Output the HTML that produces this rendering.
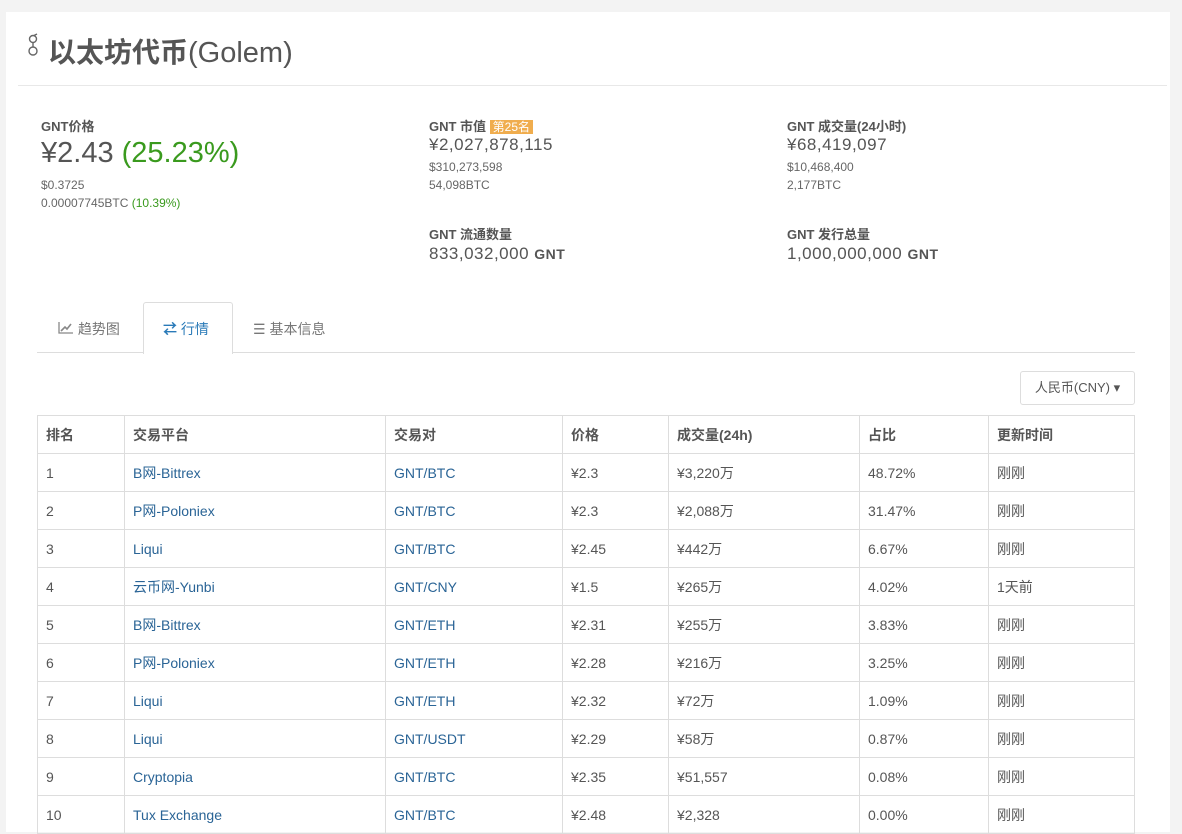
<!DOCTYPE html>
<html><head><meta charset="utf-8"><style>
body{margin:0;background:#f3f3f3;font-family:"Liberation Sans","Noto Sans CJK SC",sans-serif;color:#555;width:1182px;height:822px;overflow:hidden;position:relative}
.panel{position:absolute;left:6px;top:12px;width:1164px;height:820px;background:#fff}
.abs{position:absolute;white-space:nowrap}
.hr{position:absolute;left:12px;top:73px;width:1149px;height:1px;background:#e8e8e8}
.lbl{font-size:13px;font-weight:bold;color:#555}
.big{font-size:17px;color:#555;letter-spacing:.5px}
.sm{font-size:12px;color:#666;line-height:18px}
.g{color:#3a9a1e}
table{position:absolute;left:31px;top:403px;border-collapse:collapse;font-size:14px;width:1098px}
td,th{border:1px solid #ddd;height:37px;padding:0 8px;text-align:left;color:#555}
th{font-weight:bold;height:37px}
a{color:#2a6496;text-decoration:none}
.tabs{position:absolute;left:31px;top:340px;width:1098px;height:1px;background:#ddd}
.tab{position:absolute;font-size:14px;color:#777}
</style></head><body>
<div class="panel">
<svg class="abs" style="left:20px;top:21px" width="14" height="26" viewBox="0 0 14 26"><circle cx="7" cy="6" r="3.5" fill="none" stroke="#666" stroke-width="1.4"/><circle cx="7" cy="18" r="4" fill="none" stroke="#666" stroke-width="1.4"/><path d="M7 9.5 L7 14" stroke="#666" stroke-width="1.4"/><path d="M8 2.5 L11 1" stroke="#666" stroke-width="1.4"/></svg>
<div class="abs" style="left:42px;top:19px;font-size:28px;color:#555;font-weight:bold">以太坊代币<span style="font-weight:normal;font-size:29px">(Golem)</span></div>
<div class="hr"></div>

<div class="abs lbl" style="left:35px;top:104px">GNT价格</div>
<div class="abs" style="left:35px;top:125px;font-size:29px;color:#555">¥2.43 <span class="g">(25.23%)</span></div>
<div class="abs sm" style="left:35px;top:164px">$0.3725<br>0.00007745BTC <span class="g">(10.39%)</span></div>

<div class="abs lbl" style="left:423px;top:104px">GNT 市值 <span style="background:#f0ad4e;color:#fff;font-weight:normal;padding:0 3px;font-size:12px">第25名</span></div>
<div class="abs big" style="left:423px;top:123px">¥2,027,878,115</div>
<div class="abs sm" style="left:423px;top:146px">$310,273,598<br>54,098BTC</div>

<div class="abs lbl" style="left:781px;top:104px">GNT 成交量(24小时)</div>
<div class="abs big" style="left:781px;top:123px">¥68,419,097</div>
<div class="abs sm" style="left:781px;top:146px">$10,468,400<br>2,177BTC</div>

<div class="abs lbl" style="left:423px;top:212px">GNT 流通数量</div>
<div class="abs big" style="left:423px;top:232px">833,032,000 <span style="font-size:14px;font-weight:bold">GNT</span></div>
<div class="abs lbl" style="left:781px;top:212px">GNT 发行总量</div>
<div class="abs big" style="left:781px;top:232px">1,000,000,000 <span style="font-size:14px;font-weight:bold">GNT</span></div>

<div class="tabs"></div>
<div class="abs" style="left:137px;top:290px;width:88px;height:51px;border:1px solid #ddd;border-bottom:none;background:#fff;border-radius:3px 3px 0 0"></div>
<div class="tab" style="left:52px;top:307px"><svg width="16" height="13" viewBox="0 0 16 13"><path d="M1 1V12H15" fill="none" stroke="#888" stroke-width="1.3"/><path d="M3 10L7 6L9 8L13 3" fill="none" stroke="#888" stroke-width="1.6"/></svg> 趋势图</div>
<div class="tab" style="left:157px;top:307px;color:#2a7ab8"><span style="font-weight:bold">⇄</span> 行情</div>
<div class="tab" style="left:247px;top:307px">☰ 基本信息</div>

<div class="abs" style="left:1014px;top:359px;width:113px;height:32px;border:1px solid #ddd;border-radius:3px;font-size:13px;color:#555;line-height:32px;text-align:center">人民币(CNY) ▾</div>

<table>
<colgroup><col style="width:87px"><col style="width:261px"><col style="width:177px"><col style="width:106px"><col style="width:191px"><col style="width:129px"><col></colgroup>
<tr><th>排名</th><th>交易平台</th><th>交易对</th><th>价格</th><th>成交量(24h)</th><th>占比</th><th>更新时间</th></tr>
<tr><td>1</td><td><a>B网-Bittrex</a></td><td><a>GNT/BTC</a></td><td>¥2.3</td><td>¥3,220万</td><td>48.72%</td><td>刚刚</td></tr>
<tr><td>2</td><td><a>P网-Poloniex</a></td><td><a>GNT/BTC</a></td><td>¥2.3</td><td>¥2,088万</td><td>31.47%</td><td>刚刚</td></tr>
<tr><td>3</td><td><a>Liqui</a></td><td><a>GNT/BTC</a></td><td>¥2.45</td><td>¥442万</td><td>6.67%</td><td>刚刚</td></tr>
<tr><td>4</td><td><a>云币网-Yunbi</a></td><td><a>GNT/CNY</a></td><td>¥1.5</td><td>¥265万</td><td>4.02%</td><td>1天前</td></tr>
<tr><td>5</td><td><a>B网-Bittrex</a></td><td><a>GNT/ETH</a></td><td>¥2.31</td><td>¥255万</td><td>3.83%</td><td>刚刚</td></tr>
<tr><td>6</td><td><a>P网-Poloniex</a></td><td><a>GNT/ETH</a></td><td>¥2.28</td><td>¥216万</td><td>3.25%</td><td>刚刚</td></tr>
<tr><td>7</td><td><a>Liqui</a></td><td><a>GNT/ETH</a></td><td>¥2.32</td><td>¥72万</td><td>1.09%</td><td>刚刚</td></tr>
<tr><td>8</td><td><a>Liqui</a></td><td><a>GNT/USDT</a></td><td>¥2.29</td><td>¥58万</td><td>0.87%</td><td>刚刚</td></tr>
<tr><td>9</td><td><a>Cryptopia</a></td><td><a>GNT/BTC</a></td><td>¥2.35</td><td>¥51,557</td><td>0.08%</td><td>刚刚</td></tr>
<tr><td>10</td><td><a>Tux Exchange</a></td><td><a>GNT/BTC</a></td><td>¥2.48</td><td>¥2,328</td><td>0.00%</td><td>刚刚</td></tr>
</table>
</div>
</body></html>
